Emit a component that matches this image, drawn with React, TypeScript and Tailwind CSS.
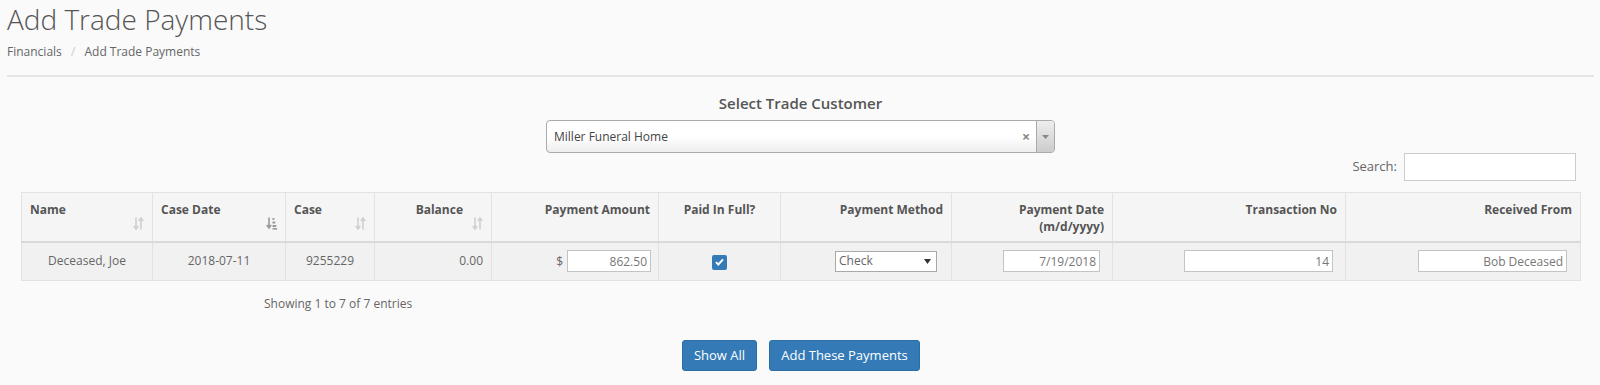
import React from "react";

// 정렬 아이콘 (↓↑)
function SortIcon({ active }: { active?: boolean }) {
  if (active) {
    return (
      <svg width="11" height="13" viewBox="0 0 11 13" className="absolute right-[8px] bottom-[11px]">
        <path d="M3 0.5v10M0.8 8l2.2 3 2.2-3" stroke="#999" strokeWidth="1.6" fill="none" />
        <rect x="6.5" y="1" width="1.8" height="2" fill="#999" />
        <rect x="6.5" y="4.5" width="2.8" height="2" fill="#999" />
        <rect x="6.5" y="8" width="3.8" height="2" fill="#999" />
        <rect x="6.5" y="11" width="4.5" height="1.6" fill="#999" />
      </svg>
    );
  }
  return (
    <svg width="11" height="13" viewBox="0 0 11 13" className="absolute right-[8px] bottom-[11px]">
      <path d="M3 0.5v11M0.8 9l2.2 3 2.2-3" stroke="#d0d0d0" strokeWidth="1.6" fill="none" />
      <path d="M8 12.5v-11M5.8 4l2.2-3 2.2 3" stroke="#d0d0d0" strokeWidth="1.6" fill="none" />
    </svg>
  );
}

const colClass = [
  "w-[131px]",
  "w-[133px]",
  "w-[89px]",
  "w-[117px]",
  "w-[167px]",
  "w-[122px]",
  "w-[171px]",
  "w-[161px]",
  "w-[233px]",
  "w-[235px]",
];

export default function App() {
  const th = "relative h-[49px] align-top pt-[8px] px-[8px] border border-[#e2e2e2] border-b-2 border-b-[#d9d9d9] font-bold text-[12px] leading-[17px] text-[#555]";
  const td = "h-[39px] align-middle px-[8px] border border-[#e2e2e2] text-[12px] text-[#666]";
  const input = "h-[22px] border border-[#c4c4c4] bg-white text-right text-[12px] text-[#777] px-[3px] outline-none";

  return (
    <div className="min-h-[385px] bg-[#fafafa] px-[7px] pr-[6px] font-['Open_Sans',sans-serif]">
      {/* 페이지 제목 */}
      <h1 className="pt-[3px] text-[28px] leading-[33px] font-light text-[#555]">Add Trade Payments</h1>
      <div className="mt-[7px] text-[12px] leading-[18px] text-[#666]">
        Financials <span className="px-[6px] text-[#ccc]">/</span> Add Trade Payments
      </div>
      <div className="mt-[14px] h-[2px] bg-[#e5e5e5]" />

      {/* 고객 선택 */}
      <div className="flex flex-col items-center">
        <p className="mt-[16px] text-[15px] leading-[20px] font-semibold text-[#555]">Select Trade Customer</p>
        <div className="mt-[7px] flex h-[33px] w-[509px] overflow-hidden rounded-[4px] border border-[#aaa] bg-gradient-to-b from-white from-50% to-[#eee]">
          <span className="flex-1 pl-[7px] text-[12px] leading-[31px] text-[#444]">Miller Funeral Home</span>
          <span className="pr-[6px] text-[14px] font-bold leading-[31px] text-[#888]">×</span>
          <span className="flex w-[18px] items-center justify-center border-l border-[#aaa] bg-gradient-to-b from-[#eee] to-[#ccc]">
            <svg width="7" height="4" viewBox="0 0 7 4">
              <path d="M0 0h7L3.5 4z" fill="#888" />
            </svg>
          </span>
        </div>
      </div>

      {/* 검색 */}
      <div className="mr-[18px] flex items-center justify-end gap-[7px]">
        <label className="text-[13px] text-[#666]">Search:</label>
        <input className="h-[28px] w-[172px] border border-[#ccc] bg-white outline-none" />
      </div>

      {/* 테이블 */}
      <div className="mx-[14px] mt-[11px]">
        <table className="w-[1559px] table-fixed border-collapse">
          <colgroup>
            {colClass.map((c, i) => (
              <col key={i} className={c} />
            ))}
          </colgroup>
          <thead className="bg-[#f5f5f5]">
            <tr>
              <th className={`${th} text-left`}>
                Name
                <SortIcon />
              </th>
              <th className={`${th} text-left`}>
                Case Date
                <SortIcon active />
              </th>
              <th className={`${th} text-left`}>
                Case
                <SortIcon />
              </th>
              <th className={`${th} text-right pr-[28px]`}>
                Balance
                <SortIcon />
              </th>
              <th className={`${th} text-right`}>Payment Amount</th>
              <th className={`${th} text-center`}>Paid In Full?</th>
              <th className={`${th} text-right`}>Payment Method</th>
              <th className={`${th} text-right`}>
                Payment Date
                <br />
                (m/d/yyyy)
              </th>
              <th className={`${th} text-right`}>Transaction No</th>
              <th className={`${th} text-right`}>Received From</th>
            </tr>
          </thead>
          <tbody className="bg-[#f1f1f1]">
            <tr>
              <td className={`${td} text-center`}>Deceased, Joe</td>
              <td className={`${td} text-center`}>2018-07-11</td>
              <td className={`${td} text-center`}>9255229</td>
              <td className={`${td} text-right`}>0.00</td>
              <td className={`${td} text-right pr-[7px]`}>
                <span className="mr-[4px]">$</span>
                <input className={`${input} w-[84px]`} defaultValue="862.50" />
              </td>
              <td className={`${td} text-center`}>
                <span className="inline-flex h-[15px] w-[15px] items-center justify-center rounded-[2px] bg-[#337ab7] align-middle">
                  <svg width="9" height="8" viewBox="0 0 9 8">
                    <path d="M1 4.2l2.3 2.3L8 1.3" stroke="white" strokeWidth="1.9" fill="none" />
                  </svg>
                </span>
              </td>
              <td className={`${td} text-right pr-[14px]`}>
                <span className="inline-flex h-[21px] w-[102px] items-center justify-between border border-[#a9a9a9] bg-white px-[3px] align-middle text-[12px] text-[#666]">
                  Check
                  <svg width="7" height="5" viewBox="0 0 7 5" className="mr-[2px]">
                    <path d="M0 0h7L3.5 5z" fill="#333" />
                  </svg>
                </span>
              </td>
              <td className={`${td} text-right pr-[12px]`}>
                <input className={`${input} w-[97px]`} defaultValue="7/19/2018" />
              </td>
              <td className={`${td} text-right pr-[12px]`}>
                <input className={`${input} w-[149px]`} defaultValue="14" />
              </td>
              <td className={`${td} text-right pr-[13px]`}>
                <input className={`${input} w-[149px]`} defaultValue="Bob Deceased" />
              </td>
            </tr>
          </tbody>
        </table>
      </div>

      {/* 정보 */}
      <p className="ml-[257px] mt-[13px] text-[12px] leading-[20px] text-[#666]">Showing 1 to 7 of 7 entries</p>

      {/* 버튼 */}
      <div className="mt-[26px] flex justify-center gap-[12px] pl-[1px]">
        <button className="h-[31px] w-[75px] rounded-[3px] border border-[#2e6da4] bg-[#337ab7] text-[13px] text-white">Show All</button>
        <button className="h-[31px] w-[151px] rounded-[3px] border border-[#2e6da4] bg-[#337ab7] text-[13px] text-white">Add These Payments</button>
      </div>
    </div>
  );
}
